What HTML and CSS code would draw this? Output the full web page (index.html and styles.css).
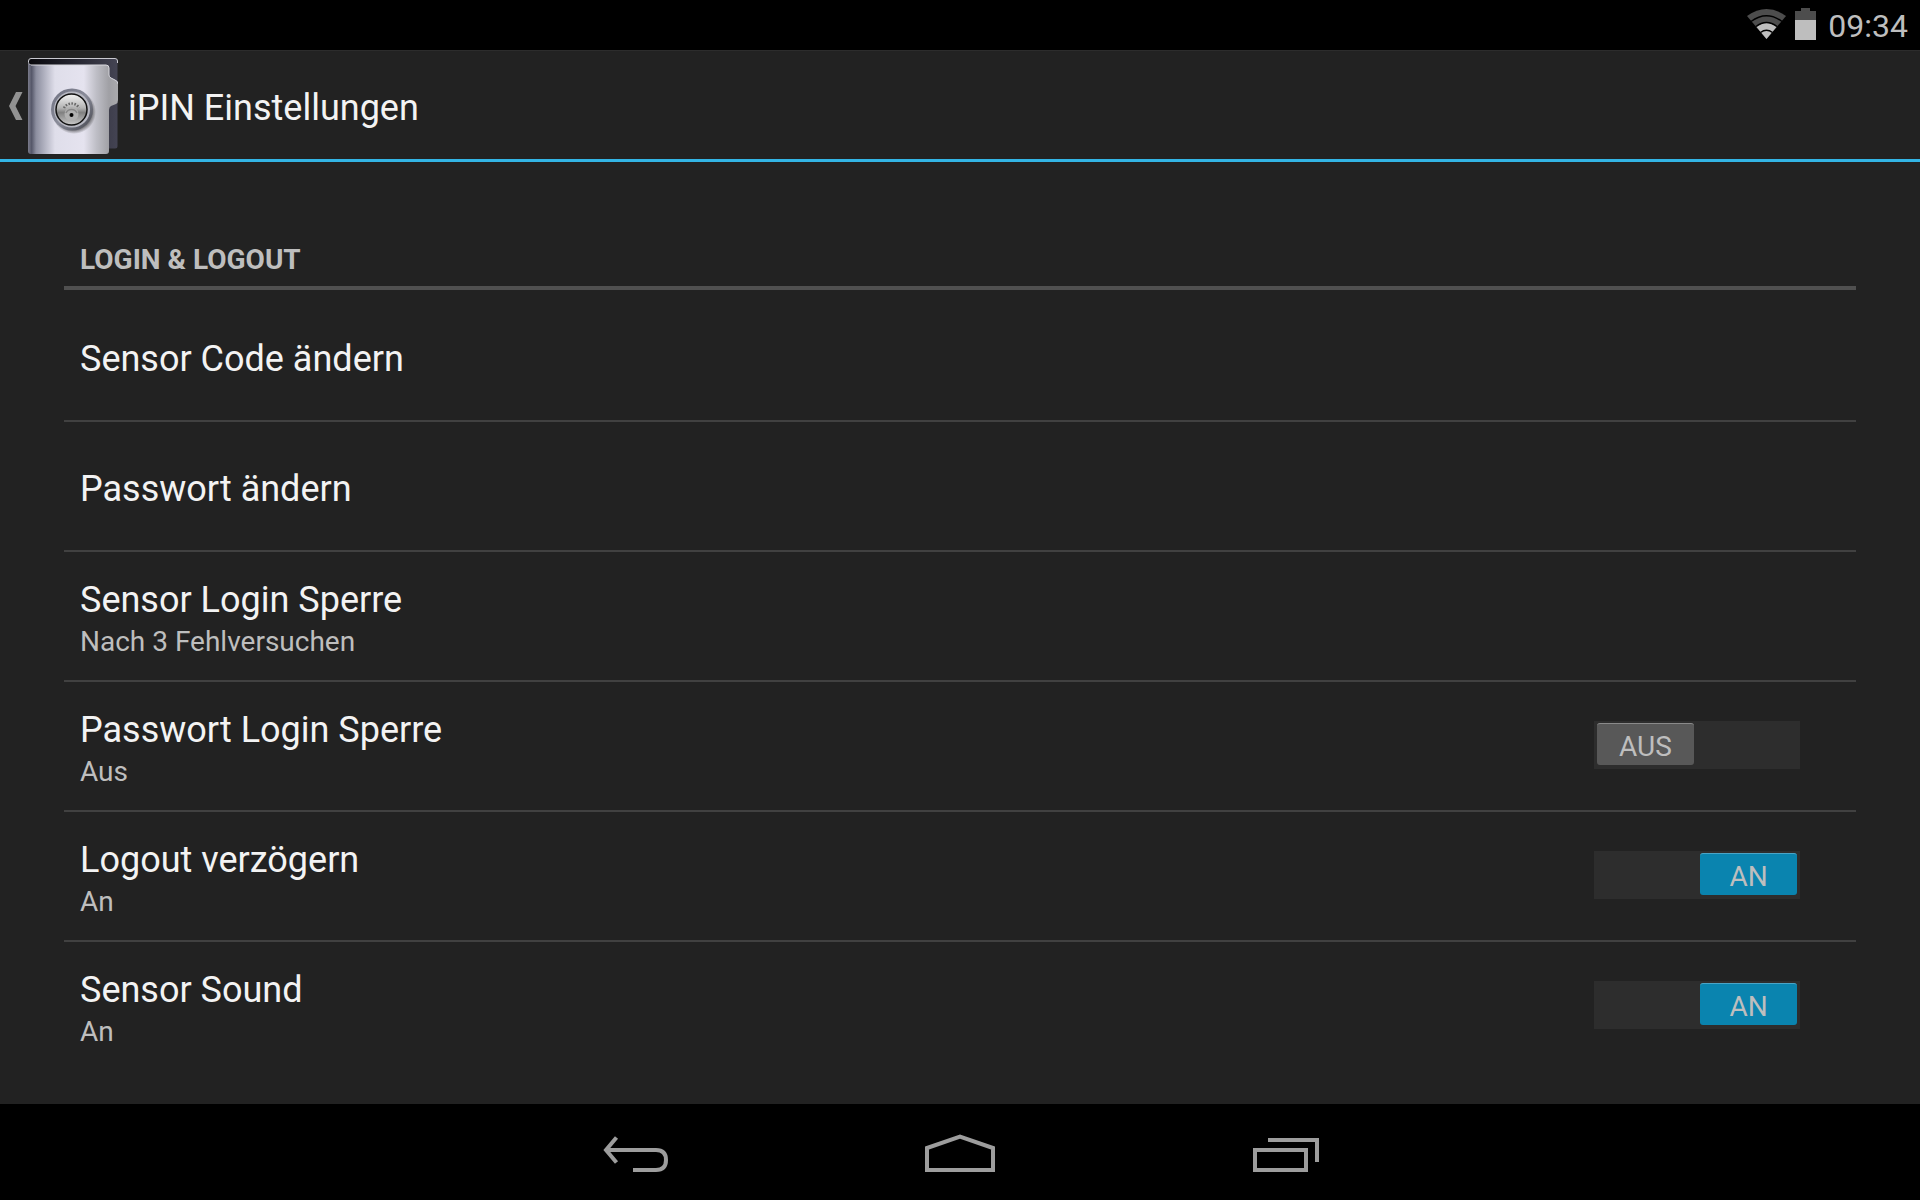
FILE: index.html
```html
<!DOCTYPE html>
<html lang="de">
<head>
    <meta charset="UTF-8">
    <meta name="viewport" content="width=device-width, initial-scale=1.0">
    <title>iPIN Einstellungen</title>
    <link rel="stylesheet" href="styles.css">
</head>
<body>

<!-- Status bar -->
<div class="status-bar">
    <svg class="wifi-icon" width="40" height="30" viewBox="0 0 40 30" aria-label="WLAN">
        <path d="M0 7Q19.500-7 39 7L19.500 30Z" fill="#4d4d4d"/>
        <path d="M9.500 18Q19.500 10 29.500 18L19.500 30Z" fill="#bebebe"/>
        <g fill="none" stroke="#000" stroke-width="1.500">
            <path d="M4 12.500Q19.500 1 35 12.500"/>
            <path d="M9 17.500Q19.500 9.500 30 17.500"/>
            <path d="M13.500 23.500Q19.500 19 25.500 23.500"/>
        </g>
    </svg>
    <svg class="battery-icon" width="21" height="32" viewBox="0 0 21 32" aria-label="Akku">
        <path d="M6 0h9v3h6v9H0V3h6z" fill="#4d4d4d"/>
        <path d="M0 12h21v20H0z" fill="#bebebe"/>
    </svg>
    <span class="clock">09:34</span>
</div>

<!-- Action bar -->
<header class="action-bar">
    <button type="button" class="up-button" aria-label="Zurück">
        <svg width="14" height="28" viewBox="0 0 14 28">
            <path d="M7 0h6.500L6.500 14l7 14H7L0 14z" fill="#929292"/>
        </svg>
        <svg class="app-icon" width="90" height="96" viewBox="0 0 90 96">
            <defs>
                <linearGradient id="door">
                    <stop offset="0" stop-color="#7b7c8c"/>
                    <stop offset="0.04" stop-color="#555769"/>
                    <stop offset="0.09" stop-color="#8c8e9f"/>
                    <stop offset="0.3" stop-color="#dfdeea"/>
                    <stop offset="0.62" stop-color="#e5e3ef"/>
                    <stop offset="0.76" stop-color="#bebec6"/>
                    <stop offset="0.9" stop-color="#a0a0a5"/>
                    <stop offset="1" stop-color="#aaaaad"/>
                </linearGradient>
                <linearGradient id="inside">
                    <stop offset="0" stop-color="#08080c"/>
                    <stop offset="0.5" stop-color="#24242f"/>
                    <stop offset="1" stop-color="#444453"/>
                </linearGradient>
                <linearGradient id="ring" x2="1" y2="1">
                    <stop offset="0" stop-color="#6e7080"/>
                    <stop offset="0.5" stop-color="#8a8c9a"/>
                    <stop offset="1" stop-color="#41424a"/>
                </linearGradient>
                <linearGradient id="dial" x2="0" y2="1">
                    <stop offset="0" stop-color="#f3f3f3"/>
                    <stop offset="0.45" stop-color="#b4b4b4"/>
                    <stop offset="0.6" stop-color="#808080"/>
                    <stop offset="1" stop-color="#c9c9c9"/>
                </linearGradient>
                <radialGradient id="shade">
                    <stop offset="0.75" stop-color="#333" stop-opacity="0.8"/>
                    <stop offset="1" stop-color="#333" stop-opacity="0"/>
                </radialGradient>
            </defs>
            <path d="M3 0.500h84a2.500 2.500 0 0 1 2.500 2.500v85a2.500 2.500 0 0 1-2.500 2.500H70V7H3a2.500 2.500 0 0 1-2.500-3z" fill="url(#inside)"/>
            <path d="M89.500 5V3A2.500 2.500 0 0 0 87 .5H3A2.500 2.500 0 0 0 .5 3v1.500A2.500 2.500 0 0 0 3 7" fill="none" stroke="#c9c9d0"/>
            <path d="M0 5Q1 7 3 7H78q3 0 3 3v7q0 2 2 3l4 2q3 1 3 4v16q0 3-2 4l-5 2q-2 1-2 4v41q0 3-3 3H3q-3 0-3-3z" fill="url(#door)"/>
            <path d="M3 7H78q3 0 3 3v7q0 2 2 3l4 2q3 1 3 4" fill="none" stroke="#d8d8de"/>
            <circle cx="46" cy="54" r="22" fill="url(#shade)"/>
            <circle cx="44" cy="51.500" r="21" fill="url(#ring)"/>
            <circle cx="44" cy="51.500" r="18" fill="#b7b8c2"/>
            <circle cx="43.500" cy="51.500" r="15.500" fill="url(#dial)" stroke="#111" stroke-width="1.500"/>
            <path d="M36 50A8.500 8.500 0 0 1 51 50" fill="none" stroke="#666" stroke-width="2.500" stroke-dasharray="1.500 1.500"/>
            <circle cx="43.500" cy="56" r="7" fill="#b0b0b0"/>
            <path d="M38 55A6 6 0 0 1 49 55" fill="none" stroke="#888" stroke-width="1.500"/>
            <circle cx="43.500" cy="57" r="2" fill="#000"/>
        </svg>
    </button>
    <h1>iPIN Einstellungen</h1>
</header>

<!-- Settings -->
<main class="settings">
    <h2>Login &amp; Logout</h2>
    <ul class="preferences">
        <li class="row">
            <button type="button" class="row-text"><span class="title">Sensor Code ändern</span></button>
        </li>
        <li class="row">
            <button type="button" class="row-text"><span class="title">Passwort ändern</span></button>
        </li>
        <li class="row">
            <button type="button" class="row-text">
                <span class="title">Sensor Login Sperre</span>
                <span class="summary">Nach 3 Fehlversuchen</span>
            </button>
        </li>
        <li class="row">
            <label class="row-text" for="passwordLock">
                <span class="title">Passwort Login Sperre</span>
                <span class="summary">Aus</span>
            </label>
            <label class="switch">
                <input type="checkbox" id="passwordLock">
                <span class="thumb off">AUS</span>
                <span class="thumb on">AN</span>
            </label>
        </li>
        <li class="row">
            <label class="row-text" for="logoutDelay">
                <span class="title">Logout verzögern</span>
                <span class="summary">An</span>
            </label>
            <label class="switch">
                <input type="checkbox" id="logoutDelay" checked>
                <span class="thumb off">AUS</span>
                <span class="thumb on">AN</span>
            </label>
        </li>
        <li class="row">
            <label class="row-text" for="sensorSound">
                <span class="title">Sensor Sound</span>
                <span class="summary">An</span>
            </label>
            <label class="switch">
                <input type="checkbox" id="sensorSound" checked>
                <span class="thumb off">AUS</span>
                <span class="thumb on">AN</span>
            </label>
        </li>
    </ul>
</main>

<!-- Navigation bar -->
<nav class="nav-bar">
    <button type="button" aria-label="Zurück">
        <svg width="72" height="60" viewBox="0 0 72 60" fill="none" stroke="#9d9d9d" stroke-width="4">
            <path d="M8 28H58Q68 28 68 38T58 48H35"/>
            <path d="M18.500 15.500L8 28L18.500 40.500"/>
        </svg>
    </button>
    <button type="button" aria-label="Startseite">
        <svg width="72" height="60" viewBox="0 0 72 60" fill="none" stroke="#9d9d9d" stroke-width="4">
            <path d="M3 48V26L36 14.500L69 26V48Z"/>
        </svg>
    </button>
    <button type="button" aria-label="Letzte Apps">
        <svg width="72" height="60" viewBox="0 0 72 60" fill="none" stroke="#9d9d9d" stroke-width="4">
            <path d="M5 28H56V48H5Z"/>
            <path d="M18 18H67V40"/>
        </svg>
    </button>
</nav>

</body>
</html>
```
FILE: styles.css
```css
* {
    box-sizing: border-box;
}
body {
    font-family: Roboto, 'Noto Sans', sans-serif;
    margin: 0;
    min-height: 100vh;
    background-color: #222;
    color: #f3f3f3;
    display: flex;
    flex-direction: column;
}
button {
    background: none;
    border: none;
    padding: 0;
    color: inherit;
    font: inherit;
    text-align: left;
    cursor: pointer;
}
svg {
    display: block;
}

/* Status bar */
.status-bar {
    height: 50px;
    padding: 0 12px;
    background-color: #000;
    display: flex;
    justify-content: flex-end;
    align-items: center;
}
.battery-icon {
    margin: 0 12px 2px 8px;
}
.wifi-icon {
    margin-bottom: 2px;
}
.clock {
    color: #bebebe;
    font-size: 32px;
    line-height: 50px;
    padding-top: 2px;
}

/* Action bar */
.action-bar {
    height: 112px;
    padding: 2px 0 0 9px;
    border-top: 1px solid #2c2c2c;
    border-bottom: 3px solid #33b5e5;
    display: flex;
    align-items: center;
    gap: 10px;
}
.up-button {
    display: flex;
    align-items: center;
    gap: 5px;
}
h1 {
    margin: 0;
    padding-top: 4px;
    font-size: 36px;
    font-weight: 400;
    line-height: 44px;
}

/* Settings list */
.settings {
    flex: 1;
    padding: 74px 64px 0;
}
h2 {
    margin: 0 0 2px;
    padding: 6px 16px 8px;
    border-bottom: 4px solid #505050;
    color: #bebebe;
    font-size: 28px;
    font-weight: 700;
    line-height: 36px;
    text-transform: uppercase;
}
.preferences {
    margin: 0;
    padding: 0;
    list-style: none;
}
.row {
    min-height: 130px;
    padding: 0 56px 0 16px;
    border-bottom: 2px solid #414141;
    display: flex;
    align-items: center;
}
.row:last-child {
    border-bottom-color: transparent;
}
.row-text {
    flex: 1;
    padding-top: 5px;
    display: flex;
    flex-direction: column;
    cursor: pointer;
}
.title {
    font-size: 36px;
    line-height: 46px;
}
.summary {
    color: #bebebe;
    font-size: 28px;
    line-height: 38px;
}

/* Switches */
.switch {
    width: 206px;
    height: 48px;
    margin-bottom: 2px;
    padding: 2px 3px 4px;
    background-color: #2d2d2d;
    display: flex;
    cursor: pointer;
}
.switch input {
    appearance: none;
    width: 0;
    margin: 0;
}
.thumb {
    display: none;
    width: 97px;
    border-radius: 3px;
    border-top: 1px solid #8a8a8a;
    background-color: #585858;
    color: #bebebe;
    font-size: 28px;
    line-height: 46px;
    text-align: center;
}
.thumb.on {
    margin-left: auto;
    border-top-color: #4aa5c8;
    background-color: #0a84af;
}
.switch input:not(:checked) ~ .off,
.switch input:checked ~ .on {
    display: block;
}

/* Navigation bar */
.nav-bar {
    height: 96px;
    background-color: #000;
    display: flex;
    justify-content: center;
    gap: 130px;
}
.nav-bar button {
    width: 196px;
    display: flex;
    justify-content: center;
    align-items: center;
}
```
